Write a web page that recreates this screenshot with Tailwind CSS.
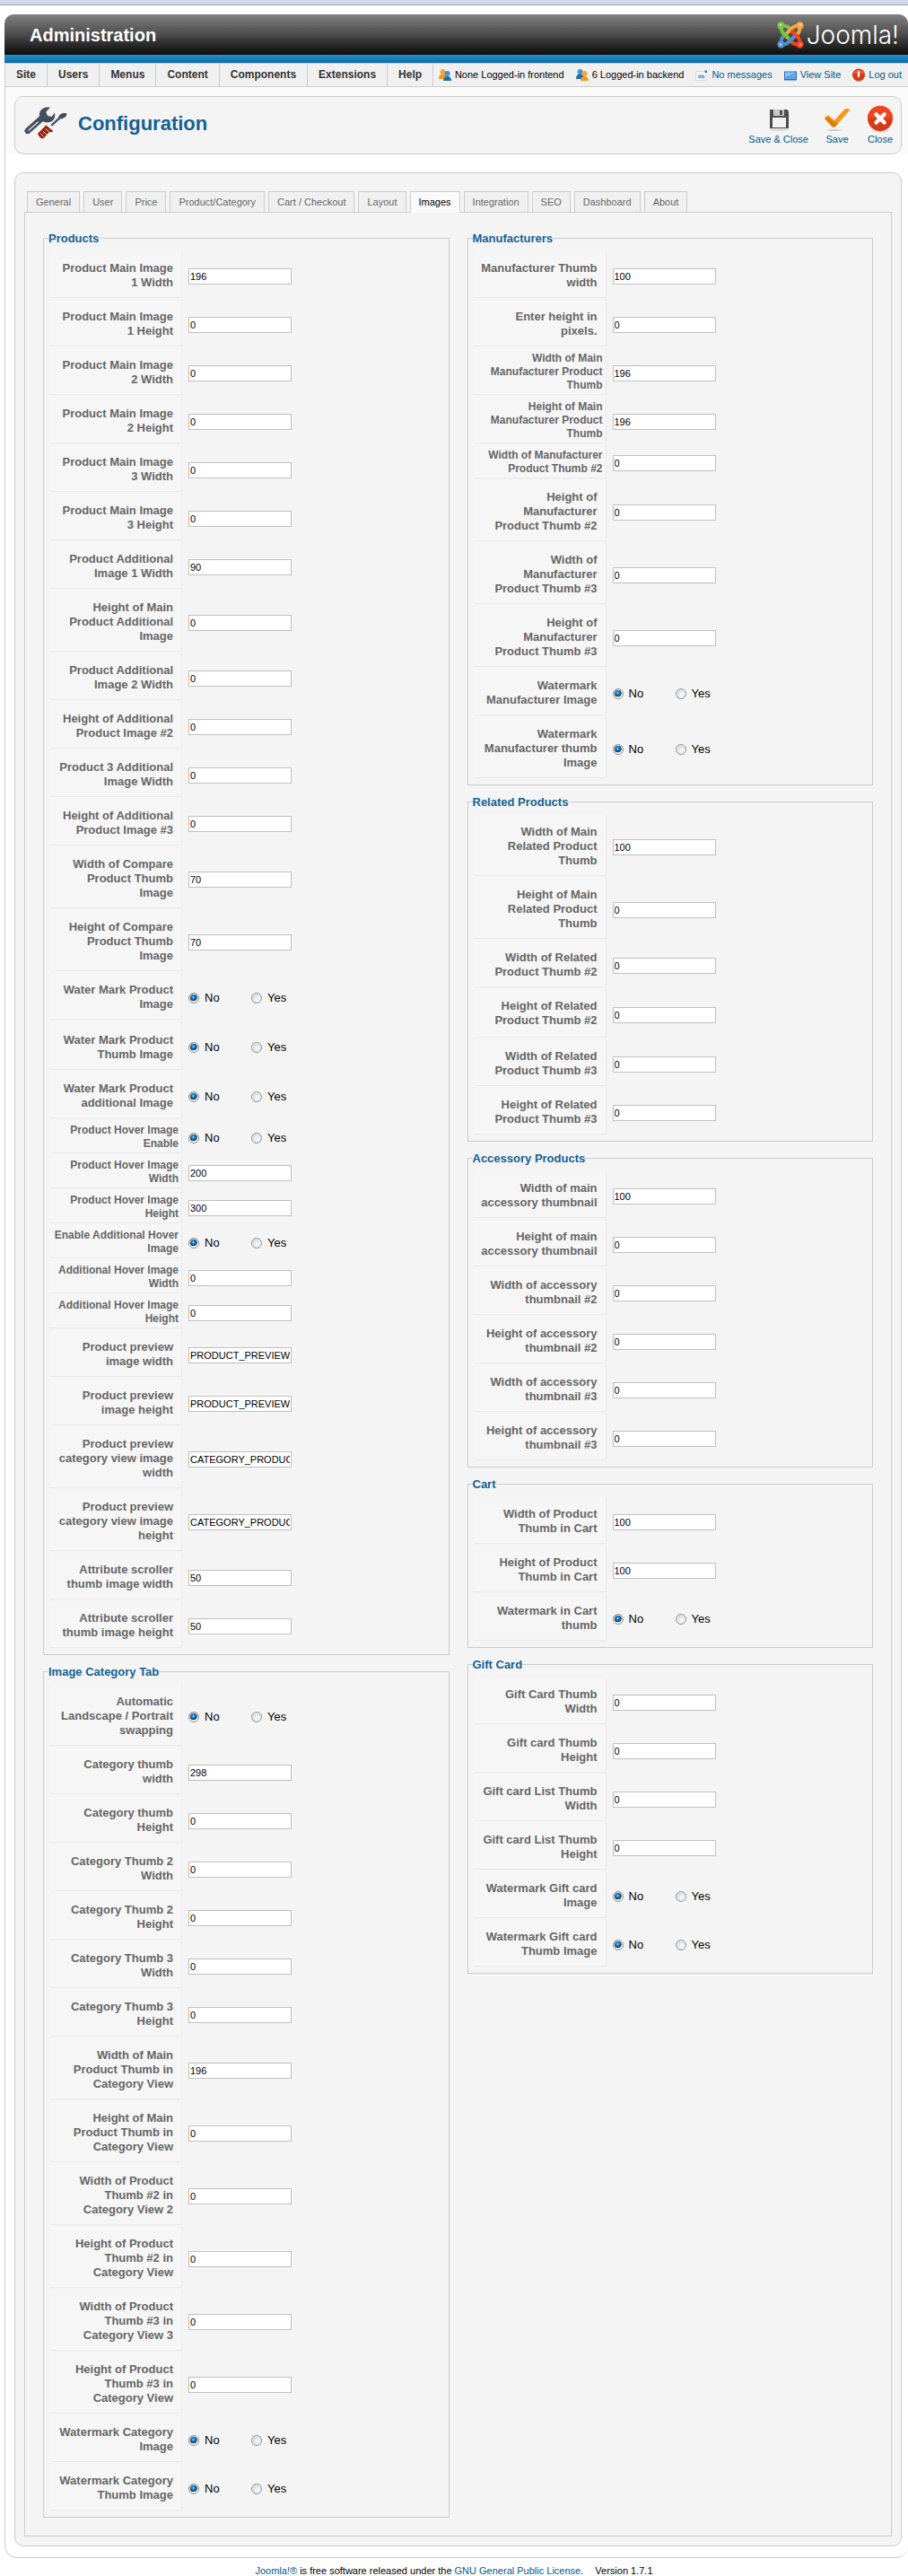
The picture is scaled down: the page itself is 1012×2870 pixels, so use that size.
<!DOCTYPE html>
<html lang="en">
<head>
<meta charset="utf-8">
<meta name="viewport" content="width=device-width, initial-scale=1">
<title>Administration - Configuration</title>
<script src="https://cdn.jsdelivr.net/npm/@tailwindcss/browser@4"></script>
</head>
<body class="bg-white font-['Liberation_Sans',Arial,sans-serif] text-[11px] text-black">
<div class="mb-2.5 h-1.5 border-b border-[#9d9da8] bg-[#ced9ec]"></div>

<div class="ml-[5px]">
  <header class="flex h-[45px] items-center justify-between rounded-t-[10px] bg-linear-to-b from-[#828282] via-[#4c4c4c] to-[#0d0d0d] pr-2.5 pl-7">
    <h1 class="text-[20px] leading-6 font-bold text-white">Administration</h1>
    <a href="#" class="flex items-center gap-[3px] text-white no-underline" aria-label="Joomla!">
      <svg width="30" height="30" viewBox="0 0 30 30" fill="none" stroke-width="4" stroke-linecap="round">
        <g stroke="#7ac143"><circle cx="4.5" cy="4.5" r="2.2" fill="#7ac143"/><path d="M4.5 4.5c0 4 0 6 3 9l5.5 5.5M4.5 5.5c4-1.5 7-.5 9 1.5l2 2"/></g>
        <g stroke="#f9a541" transform="rotate(90 15 15)"><circle cx="4.5" cy="4.5" r="2.2" fill="#f9a541"/><path d="M4.5 4.5c0 4 0 6 3 9l5.5 5.5M4.5 5.5c4-1.5 7-.5 9 1.5l2 2"/></g>
        <g stroke="#f44321" transform="rotate(180 15 15)"><circle cx="4.5" cy="4.5" r="2.2" fill="#f44321"/><path d="M4.5 4.5c0 4 0 6 3 9l5.5 5.5M4.5 5.5c4-1.5 7-.5 9 1.5l2 2"/></g>
        <g stroke="#5091cd" transform="rotate(270 15 15)"><circle cx="4.5" cy="4.5" r="2.2" fill="#5091cd"/><path d="M4.5 4.5c0 4 0 6 3 9l5.5 5.5M4.5 5.5c4-1.5 7-.5 9 1.5l2 2"/></g>
        <path d="M7.5 13.5l4 4" stroke="#7ac143"/>
        <g fill="#fff" fill-opacity=".55"><circle cx="4" cy="3.5" r="1.5"/><circle cx="26" cy="3.500" r="1.5"/><circle cx="4" cy="25.500" r="1.5"/><circle cx="26" cy="25.500" r="1.5"/></g>
      </svg>
      <span class="font-['Inter',sans-serif] text-[28px] leading-8 font-light">Joomla!</span>
    </a>
  </header>
  <div class="h-[9px] bg-linear-to-b from-[#2590cd] to-[#086aa5]"></div>

  <div class="rounded-b-[14px] border-b border-l border-[#ccc] pb-3">
    <div class="flex h-[27px] items-stretch justify-between border-y border-[#ccc] bg-[#f0f0f0] whitespace-nowrap">
      <nav class="flex text-[12px] leading-[25px] font-bold text-[#333]" id="menu"></nav>
      <div class="flex items-center gap-3 pr-[7px]">
        <span class="flex items-center gap-[3px]">
          <svg width="16" height="16" viewBox="0 0 16 16"><circle cx="5.500" cy="4" r="3" fill="#f5a738"/><path d="M1 12c0-4 2-5.500 4.500-5.500S10 8 10 12z" fill="#f29a20"/><circle cx="10.500" cy="6" r="3" fill="#3f97cf"/><path d="M6 14c0-3.500 2-5 4.500-5s4.500 1.500 4.500 5z" fill="#1d6fa8"/></svg>
          None Logged-in frontend</span>
        <span class="flex items-center gap-[3px]">
          <svg width="16" height="16" viewBox="0 0 16 16"><circle cx="5.500" cy="4" r="3" fill="#3f97cf"/><path d="M1 12c0-4 2-5.500 4.500-5.500S10 8 10 12z" fill="#1d6fa8"/><circle cx="10.500" cy="6" r="3" fill="#f5a738"/><path d="M6 14c0-3.500 2-5 4.500-5s4.500 1.500 4.500 5z" fill="#f29a20"/></svg>
          6 Logged-in backend</span>
        <a href="#" class="flex items-center gap-[3px] text-[#025a8d]">
          <svg width="16" height="16" viewBox="0 0 16 16"><path d="M2 3.500l11 .5 1 9-12.500 1z" fill="#fbfcfd" stroke="#d3dae0"/><path d="M4.500 8.500c2-2 4 1 6-.5l.5 2.500c-2 1.500-4-1.500-6 .5z" stroke="#5b88a8" fill="#b9d0df"/><rect x="11.500" y="2.500" width="2.500" height="2.500" fill="#2f79ad"/></svg>
          No messages</a>
        <a href="#" class="flex items-center gap-[3px] text-[#025a8d]">
          <svg width="16" height="16" viewBox="0 0 16 16"><rect x="1" y="3.500" width="14" height="10" fill="#2d6cb5"/><rect x="2" y="4.500" width="12" height="7.500" fill="#62a5ec"/><path d="M2 4.500h12L2 10z" fill="#8fc0f5"/></svg>
          View Site</a>
        <a href="#" class="flex items-center gap-[3px] text-[#025a8d]">
          <svg width="16" height="16" viewBox="0 0 16 16"><circle cx="8" cy="7.500" r="7" fill="#d8391a"/><path d="M2 6a6.500 6.500 0 0 1 12 0z" fill="#ee5c35"/><path d="M8 4v5" stroke="#fff" stroke-width="2.200" stroke-linecap="round"/></svg>
          Log out</a>
      </div>
    </div>

    <div class="bg-[#fbfbfb] pt-2.5 pr-[7px] pl-2.5">
      <div class="flex h-[65px] items-start justify-between rounded-[10px] border border-[#ccc] bg-[#f4f4f4] pr-[7px] pl-2.5">
        <div class="flex items-start gap-3 pt-2.5">
          <svg width="48" height="38" viewBox="80 355 146 113">
            <path d="M92 438L148 388" stroke="#434f5c" stroke-width="21" stroke-linecap="round"/>
            <path d="M134 372c6-11 18-16 34-13l-14 15 4 13 15 3 10-13c4 14-2 26-14 31-12 4-24 2-32-8-6-8-8-18-3-28z" fill="#434f5c"/>
            <path d="M94 437L128 407" stroke="#dfe4e8" stroke-width="4"/>
            <path d="M172 420L205 390" stroke="#434f5c" stroke-width="7"/>
            <path d="M196 392c2-10 14-16 28-13 2 8-6 17-20 19z" fill="#434f5c"/>
            <path d="M126 447l28-28 24 20-4 4-9-1-20 22c-8 1-16-7-19-17z" fill="#9c1f0c"/>
            <path d="M135 447l11 11M143 439l12 11M152 431l12 10" stroke="#f4d4cc" stroke-width="3"/>
          </svg>
          <h2 class="py-1 text-[22px] leading-8 font-bold text-[#146295]">Configuration</h2>
        </div>
        <div class="flex gap-4 pt-2 text-[#025a8d]">
          <button type="button" class="flex cursor-pointer flex-col items-center">
            <svg width="32" height="32" viewBox="0 0 32 32"><ellipse cx="16" cy="28" rx="11" ry="2" fill="#ddd"/><path d="M6 6h19l2 2v19H6z" fill="#4d4d4d"/><rect x="10" y="6" width="12" height="7" fill="#c9c9c9"/><rect x="17" y="7" width="3" height="5" fill="#4d4d4d"/><rect x="9" y="15" width="15" height="11" fill="#f2f2f2"/></svg>
            <span class="leading-[14px]">Save &amp; Close</span></button>
          <button type="button" class="flex cursor-pointer flex-col items-center">
            <svg width="32" height="32" viewBox="0 0 32 32"><ellipse cx="13" cy="29" rx="8" ry="1" fill="#ccc"/><path d="M2 16c1-3 3-4 5-3l6 5L24 6c2-2 6-1 6 1L14 25c-1 1-3 1-4 0z" fill="#f7981d"/><path d="M2 16l9 9c1 1 2 1 3 0l3-4-4-1-6-5z" fill="#d97d12"/></svg>
            <span class="leading-[14px]">Save</span></button>
          <button type="button" class="flex cursor-pointer flex-col items-center">
            <svg width="32" height="32" viewBox="0 0 32 32"><ellipse cx="16" cy="30" rx="10" ry="1.500" fill="#ddd"/><circle cx="16" cy="16" r="14" fill="#d8391a"/><path d="M2 16a14 14 0 0 1 28 0z" fill="#f2451f"/><path d="M11.500 11.500l9 9m0-9l-9 9" stroke="#fff" stroke-width="4.500" stroke-linecap="round"/></svg>
            <span class="leading-[14px]">Close</span></button>
        </div>
      </div>
    </div>

    <main class="mt-5 mr-[7px] ml-2.5 rounded-[10px] border border-[#ccc] bg-[#f4f4f4] px-2.5 pt-5 pb-2.5">
      <div class="-mb-px flex gap-1 pl-[3px] text-[#666]" role="tablist" id="tabs"></div>
      <form class="grid grid-cols-2 items-start gap-5 border border-[#ccc] px-5 py-5" onsubmit="return false">
        <div class="flex flex-col gap-2.5" id="left"></div>
        <div class="flex flex-col gap-2.5" id="right"></div>
      </form>
    </main>
  </div>
</div>
<footer class="py-2 text-center leading-[13px]"><a href="#" class="text-[#025a8d]">Joomla!®</a> is free software released under the <a href="#" class="text-[#025a8d]">GNU General Public License</a>. <span class="ml-2.5">Version 1.7.1</span></footer>

<script>
document.getElementById('menu').innerHTML =
  ['Site', 'Users', 'Menus', 'Content', 'Components', 'Extensions', 'Help']
    .map(t => `<a href="#" class="border-r border-[#ccc] px-3">${t}</a>`).join('');

document.getElementById('tabs').innerHTML =
  ['General', 'User', 'Price', 'Product/Category', 'Cart / Checkout', 'Layout', 'Images', 'Integration', 'SEO', 'Dashboard', 'About']
    .map(t => t === 'Images'
      ? `<button type="button" role="tab" aria-selected="true" class="h-6 border border-[#ccc] border-b-[#fafafa] bg-[#fafafa] px-[9px] text-black">${t}</button>`
      : `<button type="button" role="tab" aria-selected="false" class="h-6 border border-[#ccc] bg-[#f0f0f0] px-[9px]">${t}</button>`).join('');

// Label cell variants: regular, compact, and two with extra room above or below.
const LABEL = {
  n: 'pl-[5px] pr-[9px] pt-[11px] pb-2 text-[13px] leading-4',
  s: 'pr-[3px] pt-1 pb-0.5 text-[12px] leading-[15px]',
  t: 'pl-[5px] pr-[9px] pt-[13px] pb-2 text-[13px] leading-4',
  b: 'pl-[5px] pr-[9px] pt-[11px] pb-2.5 text-[13px] leading-4'
};
const RADIO = "size-3 appearance-none rounded-full border border-[#8e9399] bg-[radial-gradient(circle_at_60%_60%,#f4f4f4_20%,#c9ced3_75%)] shadow-[inset_0_0_0_1px_#f4f4f4] checked:bg-[radial-gradient(circle_at_45%_40%,#7fd0f5_0,#1a76b5_25%,#0d3a5c_48%,#e3e7ea_56%)]";
let id = 0;
function row([label, value, kind = 'n']) {
  const key = 'f' + (++id);
  const cell = `w-[147px] shrink-0 border-r border-b border-[#e9e9e9] bg-[#f6f6f6] text-right font-bold text-[#666] ${LABEL[kind]}`;
  if (value === null) {
    return `<div class="flex" role="radiogroup" aria-labelledby="${key}"><span id="${key}" class="${cell}">${label}</span>
      <div class="flex items-center pt-[3px] pl-[7px] text-[13px] leading-4">
        <label class="flex w-[70px] items-center gap-1.5"><input type="radio" name="${key}" checked class="${RADIO}">No</label>
        <label class="flex items-center gap-1.5"><input type="radio" name="${key}" class="${RADIO}">Yes</label>
      </div></div>`;
  }
  return `<div class="flex"><label for="${key}" class="${cell}">${label}</label>
    <div class="flex items-center pt-[3px] pl-[7px]"><input id="${key}" type="text" value="${value}" class="h-[18px] w-[115px] border border-[#c0c0c0] bg-white px-px text-[11px] leading-4"></div></div>`;
}
function group(title, rows) {
  return `<fieldset class="min-w-0 border border-[#ccc] px-[7px] pb-[7px]">
    <legend class="-ml-0.5 pt-px text-[13px] leading-[15px] font-bold text-[#146295]">${title}</legend>
    <div class="flex flex-col gap-0.5 pt-[7px]">${rows.map(row).join('')}</div></fieldset>`;
}

document.getElementById('left').innerHTML = group('Products', [
  ['Product Main Image 1 Width', '196'], ['Product Main Image 1 Height', '0'],
  ['Product Main Image 2 Width', '0'], ['Product Main Image 2 Height', '0'],
  ['Product Main Image 3 Width', '0'], ['Product Main Image 3 Height', '0'],
  ['Product Additional Image 1 Width', '90'], ['Height of Main Product Additional Image', '0'],
  ['Product Additional Image 2 Width', '0'], ['Height of Additional Product Image #2', '0'],
  ['Product 3 Additional Image Width', '0'], ['Height of Additional Product Image #3', '0'],
  ['Width of Compare Product Thumb Image', '70'], ['Height of Compare Product Thumb Image', '70'],
  ['Water Mark Product Image', null], ['Water Mark Product Thumb Image', null, 't'],
  ['Water Mark Product additional Image', null], ['Product Hover Image Enable', null, 's'],
  ['Product Hover Image Width', '200', 's'], ['Product Hover Image Height', '300', 's'],
  ['Enable Additional Hover Image', null, 's'], ['Additional Hover Image Width', '0', 's'],
  ['Additional Hover Image Height', '0', 's'],
  ['Product preview image width', 'PRODUCT_PREVIEW_IMAGE_WIDTH'], ['Product preview image height', 'PRODUCT_PREVIEW_IMAGE_HEIGHT'],
  ['Product preview category view image width', 'CATEGORY_PRODUCT_PREVIEW_IMAGE_WIDTH'],
  ['Product preview category view image height', 'CATEGORY_PRODUCT_PREVIEW_IMAGE_HEIGHT'],
  ['Attribute scroller thumb image width', '50'], ['Attribute scroller thumb image height', '50']
]) + group('Image Category Tab', [
  ['Automatic Landscape / Portrait swapping', null], ['Category thumb width', '298'],
  ['Category thumb Height', '0'], ['Category Thumb 2 Width', '0'], ['Category Thumb 2 Height', '0'],
  ['Category Thumb 3 Width', '0'], ['Category Thumb 3 Height', '0'],
  ['Width of Main Product Thumb in Category View', '196'], ['Height of Main Product Thumb in Category View', '0'],
  ['Width of Product Thumb #2 in Category View 2', '0'], ['Height of Product Thumb #2 in Category View', '0'],
  ['Width of Product Thumb #3 in Category View 3', '0'], ['Height of Product Thumb #3 in Category View', '0'],
  ['Watermark Category Image', null], ['Watermark Category Thumb Image', null]
]);

document.getElementById('right').innerHTML = group('Manufacturers', [
  ['Manufacturer Thumb width', '100'], ['Enter height in pixels.', '0'],
  ['Width of Main Manufacturer Product Thumb', '196', 's'], ['Height of Main Manufacturer Product Thumb', '196', 's'],
  ['Width of Manufacturer Product Thumb #2', '0', 's'], ['Height of Manufacturer Product Thumb #2', '0'],
  ['Width of Manufacturer Product Thumb #3', '0'], ['Height of Manufacturer Product Thumb #3', '0'],
  ['Watermark Manufacturer Image', null], ['Watermark Manufacturer thumb Image', null]
]) + group('Related Products', [
  ['Width of Main Related Product Thumb', '100'], ['Height of Main Related Product Thumb', '0'],
  ['Width of Related Product Thumb #2', '0'], ['Height of Related Product Thumb #2', '0', 'b'],
  ['Width of Related Product Thumb #3', '0'], ['Height of Related Product Thumb #3', '0']
]) + group('Accessory Products', [
  ['Width of main accessory thumbnail', '100'], ['Height of main accessory thumbnail', '0'],
  ['Width of accessory thumbnail #2', '0'], ['Height of accessory thumbnail #2', '0'],
  ['Width of accessory thumbnail #3', '0'], ['Height of accessory thumbnail #3', '0']
]) + group('Cart', [
  ['Width of Product Thumb in Cart', '100'], ['Height of Product Thumb in Cart', '100'],
  ['Watermark in Cart thumb', null]
]) + group('Gift Card', [
  ['Gift Card Thumb Width', '0'], ['Gift card Thumb Height', '0'],
  ['Gift card List Thumb Width', '0'], ['Gift card List Thumb Height', '0'],
  ['Watermark Gift card Image', null], ['Watermark Gift card Thumb Image', null]
]);
</script>
</body>
</html>
